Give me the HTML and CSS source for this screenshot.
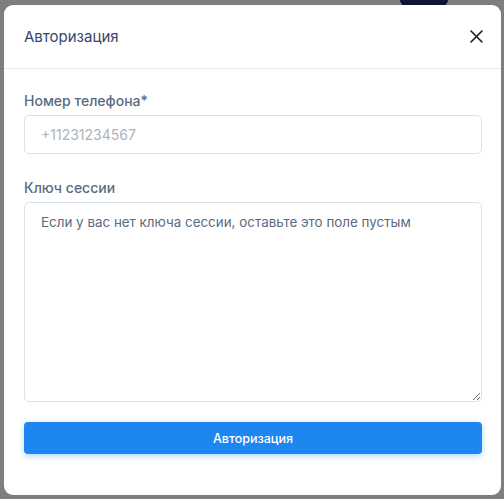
FILE: index.html
```html
<!DOCTYPE html>
<html lang="ru">
<head>
<meta charset="utf-8">
<title>Авторизация</title>
<link rel="stylesheet" href="styles.css">
</head>
<body>
<div class="backdrop">
  <div class="behind-btn"></div>
  <div class="modal">
    <div class="modal-header">
      <h2 class="modal-title">Авторизация</h2>
      <button class="close" aria-label="Закрыть">
        <svg width="13" height="13" viewBox="0 0 13 13"><path d="M1 1L12 12M12 1L1 12" stroke="#1a1a1a" stroke-width="1.6" stroke-linecap="round"/></svg>
      </button>
    </div>
    <form class="modal-body">
      <label class="label" for="phone">Номер телефона*</label>
      <input class="input" id="phone" type="text" placeholder="+11231234567">
      <label class="label label-gap" for="session">Ключ сессии</label>
      <textarea class="textarea" id="session" placeholder="Если у вас нет ключа сессии, оставьте это поле пустым"></textarea>
      <button type="button" class="submit">Авторизация</button>
    </form>
  </div>
</div>
</body>
</html>
```
FILE: styles.css
```css
* { box-sizing: border-box; }
html, body { margin: 0; padding: 0; }
body {
  font-family: Inter, "Noto Sans", sans-serif;
  background: #7e7e7e;
  width: 504px;
  height: 499px;
  overflow: hidden;
}
.backdrop {
  position: relative;
  height: 499px;
  padding: 5px 3px 4px 4px;
}
.behind-btn {
  position: absolute;
  left: 400px;
  top: -6px;
  width: 48px;
  height: 12px;
  border-radius: 6px;
  background: #0e1433;
}
.modal {
  position: relative;
  background: #fff;
  border-radius: 9px;
  height: 490px;
  display: flex;
  flex-direction: column;
}
.modal-header {
  height: 64px;
  border-bottom: 1px solid #e5e9ef;
  display: flex;
  align-items: center;
  justify-content: space-between;
  padding: 0 18px 1px 20px;
}
.modal-title {
  margin: 0;
  font-size: 15px;
  font-weight: 400;
  color: #38456a;
}
.close {
  border: 0;
  background: none;
  padding: 0;
  width: 14px;
  height: 14px;
  display: flex;
  align-items: center;
  justify-content: center;
}
.modal-body {
  display: flex;
  flex-direction: column;
  padding: 23px 19px 0 20px;
}
.label {
  font-size: 14px;
  font-weight: 500;
  color: #5a6a80;
  line-height: 18px;
  margin-bottom: 5px;
}
.label-gap { margin-top: 25px; }
.input {
  height: 39px;
  border: 1px solid #dbe1e8;
  border-radius: 5px;
  padding: 0 16px;
  font-family: inherit;
  font-size: 14px;
  color: #5a6a80;
  outline: none;
}
.input::placeholder { color: #acb3bd; }
.textarea {
  height: 200px;
  border: 1px solid #dbe1e8;
  border-radius: 5px;
  padding: 9px 16px;
  font-family: inherit;
  font-size: 13.4px;
  line-height: 20px;
  color: #5a6a80;
  resize: vertical;
  outline: none;
}
.textarea::placeholder { color: #5b6a80; opacity: 1; }
.submit {
  margin-top: 20px;
  height: 32px;
  border: 0;
  border-radius: 4px;
  background: #1e86f0;
  color: #fff;
  font-family: inherit;
  font-size: 12.5px;
  font-weight: 500;
  box-shadow: 0 2px 6px rgba(30, 134, 240, 0.35);
}
```
